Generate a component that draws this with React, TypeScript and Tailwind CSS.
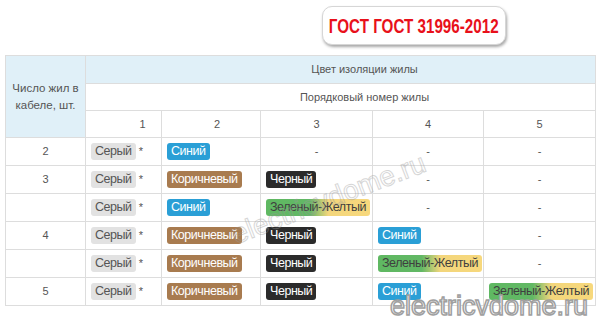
import React from 'react';

type Color = 'gray' | 'blue' | 'brown' | 'black' | 'gy';

const base = 'inline-block whitespace-nowrap rounded-[3px] px-[4px] text-[12.5px] leading-[17px] tracking-[-0.45px]';

function Badge({ c }: { c: Color }) {
  if (c === 'gray') return <span className={base + ' bg-[#e2e2e2] text-[#555]'}>Серый</span>;
  if (c === 'blue') return <span className={base + ' bg-[#2a9fd6] text-white'}>Синий</span>;
  if (c === 'brown') return <span className={base + ' bg-[#a87b4f] text-white'}>Коричневый</span>;
  if (c === 'black') return <span className={base + ' bg-[#2b2b2b] text-white'}>Черный</span>;
  return (
    <span className={base + ' bg-[linear-gradient(90deg,#5fb862_0%,#62b865_42%,#f3d67c_60%,#f7d87c_100%)] text-[#3f3f3f]'}>
      Зеленый-Желтый
    </span>
  );
}

const rows: { n: string; cells: (Color | null)[] }[] = [
  { n: '2', cells: ['blue', null, null, null] },
  { n: '3', cells: ['brown', 'black', null, null] },
  { n: '', cells: ['blue', 'gy', null, null] },
  { n: '4', cells: ['brown', 'black', 'blue', null] },
  { n: '', cells: ['brown', 'black', 'gy', null] },
  { n: '5', cells: ['brown', 'black', 'blue', 'gy'] },
];

export default function App() {
  return (
    <div className="relative h-[322px] w-[600px] overflow-hidden bg-white font-['Liberation_Sans',Arial,sans-serif]">
      {/* Title plate */}
      <div className="flex justify-end pr-[94px] pt-[6px]">
        <div className="flex h-[39px] w-[184px] items-center justify-center rounded-[10px] border border-[#d6d6d6] bg-white shadow-[1px_2px_3px_rgba(0,0,0,0.35)]">
          <span className="inline-block scale-x-[0.76] whitespace-nowrap text-[20px] font-bold text-[#e8101a]">
            ГОСТ ГОСТ 31996-2012
          </span>
        </div>
      </div>

      <table className="ml-[5px] mt-[10px] w-[590px] table-fixed border-collapse text-[11px] text-[#555]">
        <colgroup>
          <col className="w-[80px]" />
          <col className="w-[76px]" />
          <col className="w-[99px]" />
          <col className="w-[112px]" />
          <col className="w-[111px]" />
          <col className="w-[112px]" />
        </colgroup>
        <thead>
          <tr className="h-[28px] bg-[#e0f0f8]">
            <td rowSpan={3} className="border border-[#ddd] px-[4px] text-center text-[11.5px] leading-[17px]">
              Число жил в кабеле, шт.
            </td>
            <td colSpan={5} className="border border-[#ddd] pl-[48px] text-center">
              Цвет изоляции жилы
            </td>
          </tr>
          <tr className="h-[27px]">
            <td colSpan={5} className="border border-[#ddd] pl-[48px] text-center">
              Порядковый номер жилы
            </td>
          </tr>
          <tr className="h-[27px]">
            <td className="border border-[#ddd] pl-[38px] text-center">1</td>
            <td className="border border-[#ddd] pl-[12px] text-center">2</td>
            <td className="border border-[#ddd] text-center">3</td>
            <td className="border border-[#ddd] text-center">4</td>
            <td className="border border-[#ddd] text-center">5</td>
          </tr>
        </thead>
        <tbody>
          {rows.map((r, i) => (
            <tr key={i} className="h-[28px]">
              <td className="border border-[#ddd] text-center">{r.n}</td>
              <td className="whitespace-nowrap border border-[#ddd] pl-[5px]">
                <Badge c="gray" />
                <span className="ml-[3px] text-[11px]">*</span>
              </td>
              {r.cells.map((c, j) => (
                <td key={j} className={'whitespace-nowrap border border-[#ddd] ' + (c ? 'pl-[5px]' : 'text-center')}>
                  {c ? <Badge c={c} /> : '-'}
                </td>
              ))}
            </tr>
          ))}
        </tbody>
      </table>

      {/* Watermarks */}
      <div className="pointer-events-none absolute left-[226px] top-[178px] -rotate-[21deg] whitespace-nowrap text-[28px] text-transparent opacity-40 [-webkit-text-stroke:1px_#9a9a9a]">
        electricvdome.ru
      </div>
      <div className="pointer-events-none absolute left-[390px] top-[286px] whitespace-nowrap text-[27px] text-white [-webkit-text-stroke:1.5px_#a0a0a0]">
        electricvdome.ru
      </div>
    </div>
  );
}
